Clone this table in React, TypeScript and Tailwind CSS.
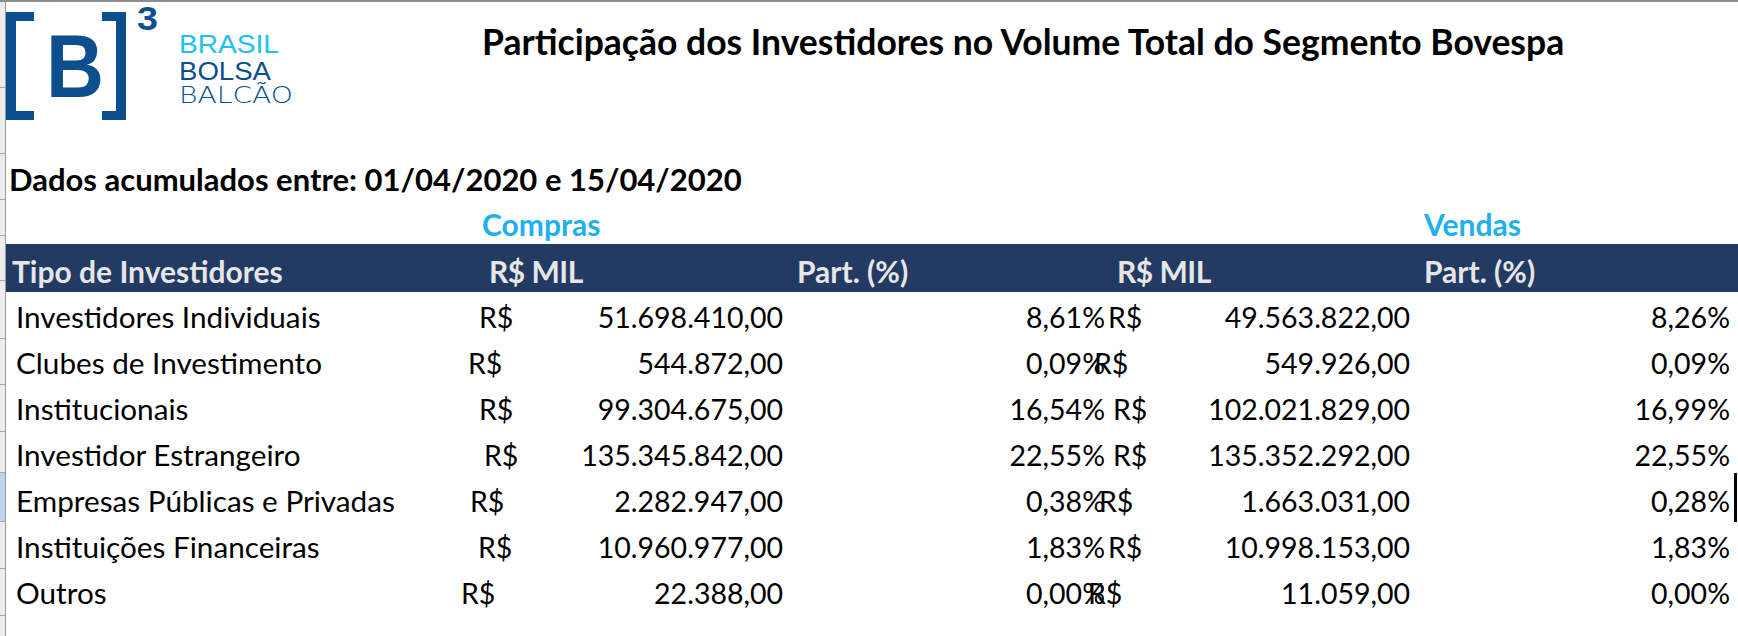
import React from "react";

type Row = {
  name: string;
  cv: string;
  cp: string;
  vv: string;
  vp: string;
  cpl: string;
  vml: string;
};

const rows: Row[] = [
  { name: "Investidores Individuais", cv: "51.698.410,00", cp: "8,61%", vv: "49.563.822,00", vp: "8,26%", cpl: "pl-[19px]", vml: "ml-[0px]" },
  { name: "Clubes de Investimento", cv: "544.872,00", cp: "0,09%", vv: "549.926,00", vp: "0,09%", cpl: "pl-[8px]", vml: "-ml-[14px]" },
  { name: "Institucionais", cv: "99.304.675,00", cp: "16,54%", vv: "102.021.829,00", vp: "16,99%", cpl: "pl-[19px]", vml: "ml-[5px]" },
  { name: "Investidor Estrangeiro", cv: "135.345.842,00", cp: "22,55%", vv: "135.352.292,00", vp: "22,55%", cpl: "pl-[24px]", vml: "ml-[5px]" },
  { name: "Empresas Públicas e Privadas", cv: "2.282.947,00", cp: "0,38%", vv: "1.663.031,00", vp: "0,28%", cpl: "pl-[10px]", vml: "-ml-[9px]" },
  { name: "Instituições Financeiras", cv: "10.960.977,00", cp: "1,83%", vv: "10.998.153,00", vp: "1,83%", cpl: "pl-[18px]", vml: "ml-[0px]" },
  { name: "Outros", cv: "22.388,00", cp: "0,00%", vv: "11.059,00", vp: "0,00%", cpl: "pl-[1px]", vml: "-ml-[20px]" },
];

const ticks: { h: string; blue?: boolean }[] = [
  { h: "h-[86px]" },
  { h: "h-[66px]" },
  { h: "h-[46px]" },
  { h: "h-[36px]" },
  { h: "h-[45px]" },
  { h: "h-[58px]" },
  { h: "h-[46px]" },
  { h: "h-[47px]" },
  { h: "h-[41px]" },
  { h: "h-[49px]", blue: true },
  { h: "h-[47px]" },
  { h: "h-[47px]" },
  { h: "h-[40px]" },
];

function Logo() {
  const navy = "#0c4f8f";
  return (
    <svg width="300" height="125" viewBox="0 0 300 125" className="block overflow-visible">
      <rect x="0" y="10" width="10" height="108" fill={navy} />
      <rect x="0" y="10" width="28" height="9" fill={navy} />
      <rect x="0" y="109" width="28" height="9" fill={navy} />
      <text
        x="40"
        y="95"
        fontFamily="'Liberation Sans', Arial, sans-serif"
        fontWeight="700"
        fontSize="89"
        textLength="58"
        lengthAdjust="spacingAndGlyphs"
        fill={navy}
      >
        B
      </text>
      <rect x="110" y="10" width="10" height="108" fill={navy} />
      <rect x="96" y="10" width="24" height="9" fill={navy} />
      <rect x="96" y="109" width="24" height="9" fill={navy} />
      <text
        x="131"
        y="28"
        fontFamily="'Liberation Sans', Arial, sans-serif"
        fontWeight="700"
        fontSize="34"
        textLength="21"
        lengthAdjust="spacingAndGlyphs"
        fill={navy}
      >
        3
      </text>
      <text
        x="173"
        y="51"
        fontFamily="'Liberation Sans', Arial, sans-serif"
        fontSize="25"
        textLength="100"
        lengthAdjust="spacingAndGlyphs"
        fill="#22c0f2"
      >
        BRASIL
      </text>
      <text
        x="173"
        y="78"
        fontFamily="'Liberation Sans', Arial, sans-serif"
        fontSize="25"
        textLength="92"
        lengthAdjust="spacingAndGlyphs"
        fill={navy}
      >
        BOLSA
      </text>
      <text
        x="173"
        y="101"
        fontFamily="'DejaVu Sans', sans-serif"
        fontWeight="200"
        fontSize="23"
        textLength="114"
        lengthAdjust="spacingAndGlyphs"
        fill={navy}
      >
        BALCÃO
      </text>
    </svg>
  );
}

export default function App() {
  return (
    <div className="relative w-[1738px] h-[636px] overflow-hidden bg-white font-[Lato,sans-serif] text-black">
      <div className="h-[2px] bg-[#8d8d8d]" />
      <div className="flex">
        {/* row header strip */}
        <div className="w-[6px] shrink-0 flex flex-col border-r border-[#9a9a9a] bg-[#ececec]">
          {ticks.map((t, i) => (
            <div
              key={i}
              className={`${t.h} border-b border-[#a8a8a8] ${t.blue ? "bg-[#bcd5ef]" : ""}`}
            />
          ))}
        </div>

        <div className="flex-1 flex flex-col">
          {/* logo + title */}
          <div className="h-[163px] flex">
            <div className="w-[476px] shrink-0">
              <Logo />
            </div>
            <h1 className="mt-[22px] text-[35.5px] leading-[35px] font-bold whitespace-nowrap">
              Participação dos Investidores no Volume Total do Segmento Bovespa
            </h1>
          </div>

          {/* dados */}
          <div className="h-[28px] pl-[3px] text-[31px] leading-[28px] font-bold whitespace-nowrap">
            Dados acumulados entre: 01/04/2020 e 15/04/2020
          </div>

          {/* compras / vendas */}
          <div className="h-[51px] pt-[17px] flex text-[30px] leading-[28px] font-bold text-[#20b0ee]">
            <div className="w-[454px] shrink-0" />
            <div className="w-[330px] shrink-0 pl-[22px]">Compras</div>
            <div className="w-[318px] shrink-0" />
            <div className="w-[307px] shrink-0" />
            <div className="flex-1 pl-[9px]">Vendas</div>
          </div>

          {/* header band */}
          <div className="h-[48px] flex bg-[#233a63] text-[30px] leading-[54px] font-bold text-[#e6e6e6] whitespace-nowrap">
            <div className="w-[454px] shrink-0 pl-[6px]">Tipo de Investidores</div>
            <div className="w-[330px] shrink-0 pl-[29px] tracking-[-0.5px]">R$ MIL</div>
            <div className="w-[318px] shrink-0 pl-[7px]">Part. (%)</div>
            <div className="w-[307px] shrink-0 pl-[9px] tracking-[-0.5px]">R$ MIL</div>
            <div className="flex-1 pl-[9px]">Part. (%)</div>
          </div>

          {/* data rows */}
          <div className="mt-[2px] flex flex-col text-[28.5px] leading-[46px] whitespace-nowrap">
            {rows.map((r) => (
              <div key={r.name} className="h-[46px] flex">
                <div className="w-[454px] shrink-0 pl-[10px] text-[29.7px]">{r.name}</div>
                <div className={`w-[330px] shrink-0 flex justify-between pr-[7px] ${r.cpl}`}>
                  <span>R$</span>
                  <span>{r.cv}</span>
                </div>
                <div className="w-[318px] shrink-0 text-right pr-[3px]">{r.cp}</div>
                <div className="w-[307px] shrink-0 flex justify-between pr-[5px]">
                  <span className={r.vml}>R$</span>
                  <span>{r.vv}</span>
                </div>
                <div className="flex-1 text-right pr-[8px]">{r.vp}</div>
              </div>
            ))}
          </div>
        </div>
      </div>

      {/* active cell cursor */}
      <div className="absolute left-[1734px] top-[473px] w-[3px] h-[49px] bg-black" />
    </div>
  );
}
